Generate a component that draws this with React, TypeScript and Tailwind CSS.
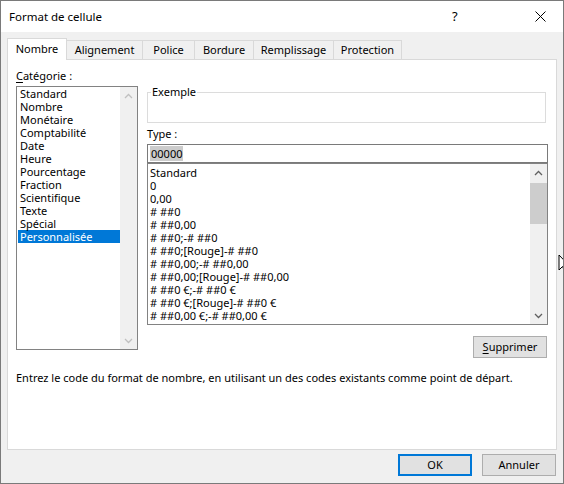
import React from 'react';

const categories = [
  'Standard',
  'Nombre',
  'Monétaire',
  'Comptabilité',
  'Date',
  'Heure',
  'Pourcentage',
  'Fraction',
  'Scientifique',
  'Texte',
  'Spécial',
  'Personnalisée',
];

const formats = [
  'Standard',
  '0',
  '0,00',
  '# ##0',
  '# ##0,00',
  '# ##0;-# ##0',
  '# ##0;[Rouge]-# ##0',
  '# ##0,00;-# ##0,00',
  '# ##0,00;[Rouge]-# ##0,00',
  '# ##0 €;-# ##0 €',
  '# ##0 €;[Rouge]-# ##0 €',
  '# ##0,00 €;-# ##0,00 €',
];

const tabs = [
  { label: 'Nombre', w: 'w-[60px]' },
  { label: 'Alignement', w: 'w-[77px]' },
  { label: 'Police', w: 'w-[53px]' },
  { label: 'Bordure', w: 'w-[60px]' },
  { label: 'Remplissage', w: 'w-[81px]' },
  { label: 'Protection', w: 'w-[69px]' },
];

function Chevron({ up, color }: { up: boolean; color: string }) {
  return (
    <svg width="9" height="6" viewBox="0 0 9 6">
      <path
        d={up ? 'M1 5 L4.5 1.5 L8 5' : 'M1 1 L4.5 4.5 L8 1'}
        fill="none"
        stroke={color}
        strokeWidth="1.3"
      />
    </svg>
  );
}

function ScrollBar({ thumb, disabled }: { thumb: boolean; disabled: boolean }) {
  const c = disabled ? '#c0c0c0' : '#606060';
  return (
    <div className="w-[17px] bg-[#f0f0f0] flex flex-col items-center">
      <div className="h-[17px] w-full flex items-center justify-center">
        <Chevron up color={c} />
      </div>
      <div className="flex-1 w-full">
        {thumb && <div className="mt-[2px] h-[41px] w-full bg-[#cdcdcd]" />}
      </div>
      <div className="h-[17px] w-full flex items-center justify-center">
        <Chevron up={false} color={c} />
      </div>
    </div>
  );
}

export default function App() {
  return (
    <div className="relative w-[564px] h-[484px] overflow-hidden border border-[#7a7a7a] bg-[#f0f0f0] flex flex-col text-[11px] text-black font-['Noto_Sans',sans-serif]">
      {/* title bar */}
      <div className="h-[31px] bg-white flex items-center pl-[8px] text-[11.5px]">
        <span className="flex-1">Format de cellule</span>
        <span className="w-[10px] mr-[73px] text-[13px]">?</span>
        <svg width="11" height="11" viewBox="0 0 11 11" className="mr-[17px]">
          <path d="M0.5 0.5 L10.5 10.5 M10.5 0.5 L0.5 10.5" stroke="#000" strokeWidth="1" />
        </svg>
      </div>

      <div className="flex-1 flex flex-col px-[6px] pt-[6px]">
        {/* tabs */}
        <div className="flex items-end h-[21px]">
          {tabs.map((t, i) =>
            i === 0 ? (
              <div
                key={t.label}
                className={`${t.w} relative z-10 h-[22px] -mb-px bg-white border border-b-0 border-[#d9d9d9] flex items-center justify-center`}
              >
                {t.label}
              </div>
            ) : (
              <div
                key={t.label}
                className={`${t.w} h-[19px] -ml-px bg-[#f0f0f0] border border-b-0 border-[#d9d9d9] flex items-center justify-center`}
              >
                {t.label}
              </div>
            )
          )}
        </div>

        {/* panel */}
        <div className="h-[391px] bg-white border border-[#d9d9d9] flex flex-col">
          <div className="flex">
            {/* left column */}
            <div className="ml-[8px] pt-[8px] flex flex-col">
              <div className="leading-[16px]">
                <span className="underline underline-offset-2">C</span>atégorie :
              </div>
              <div className="mt-[2px] w-[122px] h-[264px] border border-[#828282] flex">
                <div className="flex-1 pl-[1px]">
                  {categories.map((c) => (
                    <div
                      key={c}
                      className={`leading-[13px] h-[13px] pl-[2px] ${
                        c === 'Personnalisée' ? 'bg-[#0078d7] text-white' : ''
                      }`}
                    >
                      {c}
                    </div>
                  ))}
                </div>
                <ScrollBar thumb={false} disabled />
              </div>
            </div>

            {/* right column */}
            <div className="ml-[9px] w-[401px] pt-[24px] flex flex-col">
              <fieldset className="w-[399px] h-[39px] border border-[#dcdcdc]">
                <legend className="ml-[3px] px-[1px] leading-[16px]">Exemple</legend>
              </fieldset>
              <div className="mt-[3px] leading-[16px]">Type :</div>
              <div className="mt-[2px] h-[19px] border border-[#7a7a7a] flex items-center pl-[2px]">
                <span className="bg-[#cccccc] leading-[15px] px-[1px]">00000</span>
              </div>
              <div className="h-[162px] border border-[#828282] flex">
                <div className="flex-1 pl-[2px] pt-[2px]">
                  {formats.map((f, i) => (
                    <div key={i} className="leading-[13px] h-[13px] whitespace-pre">
                      {f}
                    </div>
                  ))}
                </div>
                <ScrollBar thumb disabled={false} />
              </div>
              <button className="mt-[11px] mr-[1px] self-end w-[74px] h-[22px] bg-[#e1e1e1] border border-[#adadad]">
                <span className="underline underline-offset-2">S</span>upprimer
              </button>
            </div>
          </div>
          <div className="ml-[8px] mt-[12px] leading-[16px]">
            Entrez le code du format de nombre, en utilisant un des codes existants comme point de départ.
          </div>
        </div>

        {/* buttons */}
        <div className="flex justify-end gap-[10px] mt-[4px] mr-px">
          <button className="w-[74px] h-[22px] bg-[#e1e1e1] border-2 border-[#0078d7]">OK</button>
          <button className="w-[74px] h-[22px] bg-[#e1e1e1] border border-[#adadad]">Annuler</button>
        </div>
      </div>

      {/* mouse pointer */}
      <svg width="12" height="19" viewBox="0 0 12 19" className="absolute left-[557px] top-[253px]">
        <path d="M1 1 L1 16 L4.5 12.5 L7 18 L9 17 L6.5 11.5 L11 11.5 Z" fill="#fff" stroke="#000" strokeWidth="1" />
      </svg>
    </div>
  );
}
